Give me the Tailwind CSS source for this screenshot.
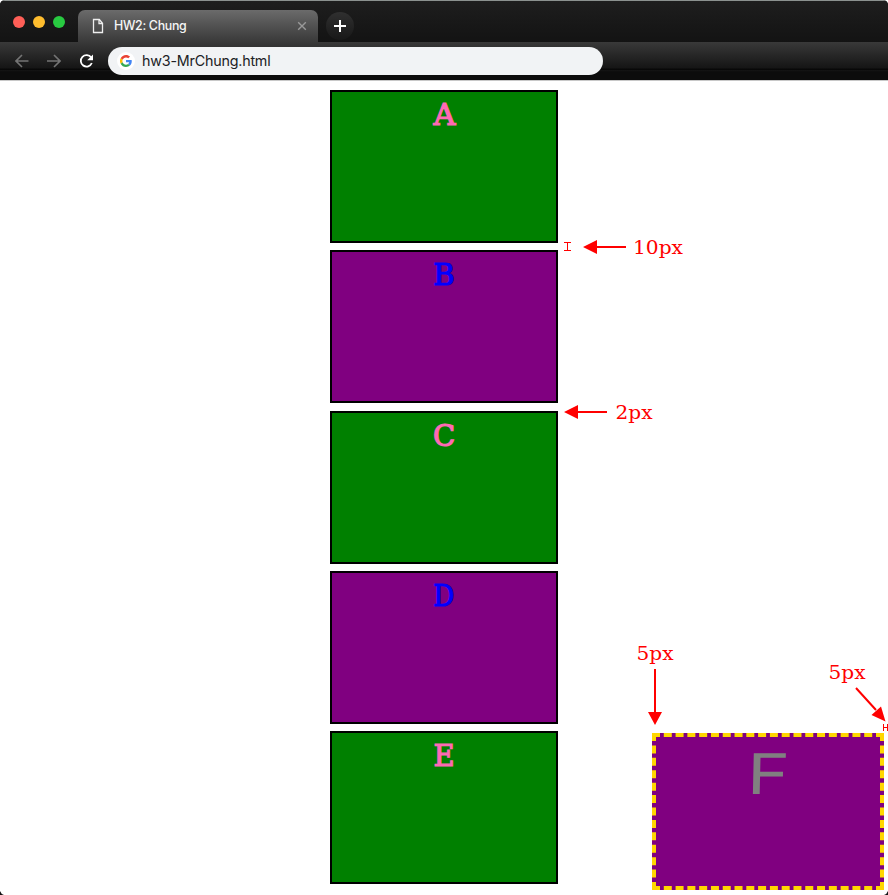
<!DOCTYPE html>
<html lang="en">
<head>
<meta charset="utf-8">
<title>HW2: Chung</title>
<script src="https://cdn.jsdelivr.net/npm/@tailwindcss/browser@4"></script>
</head>
<body class="relative h-[895px] w-[888px] overflow-hidden bg-white">
<header class="h-[80px] w-full overflow-hidden rounded-t-[5px] bg-[#0c0c0c]">
  <div class="flex h-[42px] items-start border-t border-[#8b918f] bg-linear-to-b from-[#1e1e1e] to-[#131313]">
    <div class="flex w-[78px] gap-2 pt-[15px] pl-[13px]">
      <span class="size-3 rounded-full bg-[#ff5f57]"></span>
      <span class="size-3 rounded-full bg-[#ffbd2e]"></span>
      <span class="size-3 rounded-full bg-[#28ca41]"></span>
    </div>
    <div class="mt-[9px] flex h-[32px] w-[240px] items-center rounded-t-[7px] bg-linear-to-b from-[#6b6b6b] to-[#393939] pl-[14px]">
      <svg class="h-[16px] w-[12px]" viewBox="0 0 12 16" fill="none" stroke="#eee" stroke-width="1.3"><path d="M1.5 1.5h5.8l3.2 3.7v9.3h-9zM7 1.5v4h3.5"/></svg>
      <span class="ml-[10px] w-[183px] font-['Inter',sans-serif] text-[12.4px] font-medium tracking-[-0.3px] text-[#f5f5f5]">HW2: Chung</span>
      <svg class="size-[10px]" viewBox="0 0 10 10" stroke="#999" stroke-width="1.4"><path d="M1.2 1.2l7.6 7.6M8.800 1.2L1.2 8.800"/></svg>
    </div>
    <div class="mt-[11px] ml-[8px] flex size-7 items-center justify-center rounded-full bg-linear-to-b from-[#303030] to-[#181818]">
      <svg class="size-3" viewBox="0 0 12 12" stroke="#fff" stroke-width="2"><path d="M6 0v12M0 6h12"/></svg>
    </div>
  </div>
  <div class="flex h-[38px] items-start bg-[linear-gradient(#393939_0px,#151515_26px,#080808_27px,#080808_28px,#151515_28px,#0c0c0c_30px,#0c0c0c_38px)]">
    <div class="flex w-[108px] items-center pt-[11px] pl-[15px]">
      <svg class="h-[16px] w-[14px]" viewBox="0 0 14 16" fill="none" stroke="#747474" stroke-width="1.6"><path d="M13.500 8H1.500M7 2L1 8l6 6"/></svg>
      <svg class="ml-[18px] h-[16px] w-[14px]" viewBox="0 0 14 16" fill="none" stroke="#747474" stroke-width="1.6"><path d="M0 8h12.500M7 2l6 6-6 6"/></svg>
      <svg class="ml-[18px] h-[16px] w-[15px]" viewBox="0 0 15 16" fill="none" stroke="#fff" stroke-width="1.8"><path d="M12.200 4.600A5.700 5.700 0 1 0 12.800 10"/><path d="M14 1.500v5.800H8.200z" fill="#fff" stroke="none"/></svg>
    </div>
    <div class="mt-[5px] flex h-[28px] w-[495px] items-center rounded-full bg-[#f1f3f5] pl-[9px]">
      <span class="flex size-[18px] items-center justify-center rounded-full bg-white">
        <svg class="size-[12px]" viewBox="0 0 48 48"><path fill="#ea4335" d="M24 9.500c3.500 0 6.700 1.200 9.200 3.600l6.900-6.900C35.900 2.400 30.500 0 24 0 14.600 0 6.500 5.400 2.600 13.200l8 6.200C12.400 13.700 17.700 9.500 24 9.500z"/><path fill="#4285f4" d="M47 24.500c0-1.600-.2-3.100-.4-4.500H24v9h12.900c-.6 3-2.200 5.500-4.700 7.200l7.700 6C44.400 38 47 31.800 47 24.500z"/><path fill="#fbbc05" d="M10.500 28.600a14 14 0 0 1 0-9.200l-8-6.200a24 24 0 0 0 0 21.600z"/><path fill="#34a853" d="M24 48c6.500 0 11.900-2.100 15.900-5.800l-7.700-6c-2.200 1.500-4.900 2.300-8.200 2.300-6.300 0-11.600-4.200-13.500-9.900l-8 6.200C6.500 42.600 14.600 48 24 48z"/></svg>
      </span>
      <span class="ml-[7px] font-['Inter',sans-serif] text-[14.3px] tracking-[-0.2px] text-[#202124]">hw3-MrChung.html</span>
    </div>
  </div>
</header>
<main class="flex flex-col items-center gap-[7.3px] border-t border-[#c8c8c8] pt-[9px] font-['DejaVu_Serif',serif] text-[29px] leading-[46px]">
  <div class="h-[153px] w-[228px] border-2 border-black bg-[#008000] text-center text-[#ff69b4] [-webkit-text-stroke:1.2px]"><span class="inline-block scale-x-105">A</span></div>
  <div class="h-[153px] w-[228px] border-2 border-black bg-[#800080] text-center text-[#0000ff] [-webkit-text-stroke:1.2px]">B</div>
  <div class="h-[153px] w-[228px] border-2 border-black bg-[#008000] text-center text-[#ff69b4] [-webkit-text-stroke:1.2px]">C</div>
  <div class="h-[153px] w-[228px] border-2 border-black bg-[#800080] text-center text-[#0000ff] [-webkit-text-stroke:1.2px]"><span class="inline-block scale-x-90">D</span></div>
  <div class="h-[153px] w-[228px] border-2 border-black bg-[#008000] text-center text-[#ff69b4] [-webkit-text-stroke:1.2px]">E</div>
</main>
<div class="absolute top-[733px] left-[652px] h-[157px] w-[232px] border-4 border-dashed border-[#ffd700] bg-[#800080] text-center font-['Inter',sans-serif] text-[56px] leading-[74px] text-[#808080]"><span class="relative left-[1px] inline-block scale-x-130 -skew-x-1">F</span></div>
<svg class="absolute inset-0 h-[895px] w-[888px]" viewBox="0 0 888 895">
  <g fill="none" stroke="#f00" stroke-width="2"><path d="M597 247h29M578 412h29M655 669v43M856 688l20 22"/></g>
  <path fill="#f00" d="M583 247l14-7v14zM564 412l14-7v14zM655 725l-7-13h14zM885.500 721.500l-14-6.500 9.500-8.500z"/>
  <path fill="none" stroke="#f00" d="M564 242.500h7M564 250.500h7M567.500 242v9M883.500 724v7M887.500 724v7M883 727.500h5"/>
  <g fill="#f00" class="font-['DejaVu_Serif',serif] text-[18px]">
    <text x="633" y="253.500" textLength="50" lengthAdjust="spacingAndGlyphs">10px</text>
    <text x="615.500" y="418.500" textLength="37" lengthAdjust="spacingAndGlyphs">2px</text>
    <text x="636.500" y="659.500" textLength="37" lengthAdjust="spacingAndGlyphs">5px</text>
    <text x="828.500" y="678.500" textLength="37" lengthAdjust="spacingAndGlyphs">5px</text>
  </g>
  <path fill="#111" d="M0 891q1 3 4 4H0zM888 891q-1 3-4 4h4z"/>
</svg>
</body>
</html>
